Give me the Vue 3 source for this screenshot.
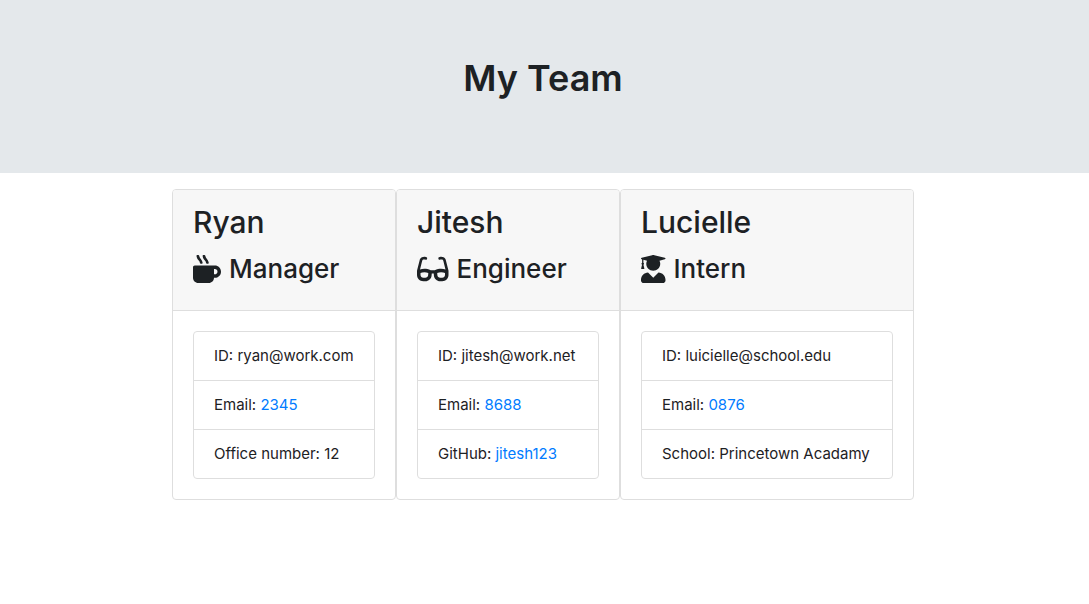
<script setup>
const icons = {
  mug: {
    width: 512,
    path: 'M127.1 146.5c1.3 7.7 8 13.5 16 13.5h16.5c9.8 0 17.6-8.5 16.3-18-3.8-28.2-16.4-54.2-36.6-74.7-14.4-14.7-23.6-33.3-26.4-53.5C111.8 5.9 105 0 96.8 0H80.4C70.6 0 63 8.5 64.1 18c3.9 31.9 18 61.3 40.6 84.4 12 12.2 19.7 27.5 22.4 44.1zm112 0c1.3 7.7 8 13.5 16 13.5h16.5c9.8 0 17.6-8.5 16.3-18-3.8-28.2-16.4-54.2-36.6-74.7-14.4-14.7-23.6-33.3-26.4-53.5C223.8 5.9 217 0 208.8 0h-16.4c-9.8 0-17.5 8.5-16.3 18 3.9 31.9 18 61.3 40.6 84.4 12 12.2 19.7 27.5 22.4 44.1zM400 192H32c-17.7 0-32 14.3-32 32v192c0 53 43 96 96 96h192c53 0 96-43 96-96h16c61.8 0 112-50.2 112-112s-50.2-112-112-112zm0 160h-16v-96h16c26.5 0 48 21.5 48 48s-21.5 48-48 48z',
  },
  glasses: {
    width: 576,
    path: 'M574.1 280.37L528.75 98.66c-5.91-23.7-21.59-44.05-43-55.81-21.44-11.73-46.97-14.11-70.19-6.33l-15.25 5.08c-8.39 2.79-12.92 11.86-10.12 20.24l5.06 15.18c2.79 8.38 11.85 12.91 20.23 10.12l13.18-4.39c10.87-3.62 23-3.57 33.16 1.73 10.29 5.37 17.57 14.56 20.37 25.82l38.46 153.82c-22.19-6.81-49.79-12.46-81.2-12.46-34.77 0-73.98 7.02-114.85 26.74h-73.18c-40.87-19.74-80.08-26.75-114.86-26.75-31.42 0-59.02 5.65-81.21 12.46l38.46-153.83c2.79-11.25 10.09-20.45 20.38-25.81 10.16-5.3 22.28-5.35 33.15-1.73l13.17 4.39c8.38 2.79 17.44-1.74 20.23-10.12l5.06-15.18c2.8-8.38-1.73-17.45-10.12-20.24l-15.25-5.08c-23.22-7.78-48.75-5.41-70.19 6.33-21.41 11.77-37.09 32.11-43 55.8L1.9 280.37A64.218 64.218 0 0 0 0 295.86v70.25C0 429.01 51.58 480 115.2 480h37.12c60.28 0 110.37-45.94 114.88-105.37l2.93-38.63h35.75l2.93 38.63C313.31 434.06 363.4 480 423.68 480h37.12c63.62 0 115.2-50.99 115.2-113.88v-70.25c0-5.23-.64-10.43-1.9-15.5zm-370.72 89.42c-1.97 25.91-24.4 46.21-51.06 46.21H115.2C86.97 416 64 393.62 64 366.11v-37.54c18.12-6.49 43.42-12.92 72.58-12.92 23.86 0 47.26 4.33 69.93 12.92l-3.13 41.22zM512 366.12c0 27.51-22.97 49.88-51.2 49.88h-37.12c-26.67 0-49.1-20.3-51.06-46.21l-3.13-41.22c22.67-8.59 46.08-12.92 69.95-12.92 29.12 0 54.43 6.44 72.55 12.93v37.54z',
  },
  graduate: {
    width: 448,
    path: 'M319.4 320.6L224 416l-95.4-95.4C57.1 323.7 0 382.2 0 454.4v9.6c0 26.5 21.5 48 48 48h352c26.5 0 48-21.5 48-48v-9.6c0-72.2-57.1-130.7-128.6-133.8zM13.6 79.8l6.4 1.5v58.4c-7 4.2-12 11.5-12 20.3 0 8.4 4.6 15.4 11.1 19.7L3.5 242c-1.7 6.9 2.1 14 7.6 14h41.8c5.5 0 9.3-7.1 7.6-14l-15.6-62.3C51.4 175.4 56 168.4 56 160c0-8.8-5-16.1-12-20.3V87.1l66 15.9c-8.6 17.2-14 36.4-14 57 0 70.7 57.3 128 128 128s128-57.3 128-128c0-20.6-5.3-39.8-14-57l96.3-23.2c18.2-4.4 18.2-27.1 0-31.5l-190.4-46c-13-3.1-26.7-3.1-39.7 0L13.6 48.2c-18.1 4.4-18.1 27.2 0 31.6z',
  },
}

const team = [
  {
    name: 'Ryan', role: 'Manager', icon: icons.mug,
    details: [
      { label: 'ID', value: 'ryan@work.com' },
      { label: 'Email', value: '2345', href: 'mailto:2345' },
      { label: 'Office number', value: '12' },
    ],
  },
  {
    name: 'Jitesh', role: 'Engineer', icon: icons.glasses,
    details: [
      { label: 'ID', value: 'jitesh@work.net' },
      { label: 'Email', value: '8688', href: 'mailto:8688' },
      { label: 'GitHub', value: 'jitesh123', href: '#jitesh123' },
    ],
  },
  {
    name: 'Lucielle', role: 'Intern', icon: icons.graduate,
    details: [
      { label: 'ID', value: 'luicielle@school.edu' },
      { label: 'Email', value: '0876', href: 'mailto:0876' },
      { label: 'School', value: 'Princetown Acadamy' },
    ],
  },
]
</script>

<template>
  <div class="page">
    <header class="banner">
      <h1>My Team</h1>
    </header>
    <main class="team">
      <article v-for="member in team" :key="member.name" class="card">
        <div class="card-header">
          <h2>{{ member.name }}</h2>
          <h3>
            <svg class="icon" :viewBox="`0 0 ${member.icon.width} 512`" aria-hidden="true">
              <path :d="member.icon.path" />
            </svg>
            <span>{{ member.role }}</span>
          </h3>
        </div>
        <div class="card-body">
          <ul>
            <li v-for="item in member.details" :key="item.label">
              {{ item.label }}: <a v-if="item.href" :href="item.href">{{ item.value }}</a><template v-else>{{ item.value }}</template>
            </li>
          </ul>
        </div>
      </article>
    </main>
  </div>
</template>

<style>
body {
  margin: 0;
  background: #fff;
}
</style>

<style scoped>
.page {
  color: #1d2124;
  font-family: Inter, "Liberation Sans", sans-serif;
  font-size: 15px;
  line-height: 24px;
}
h1,
h2,
h3,
ul {
  margin: 0;
  padding: 0;
  font-weight: 500;
}
.banner {
  padding: 54px 35px 71px 32px;
  margin-bottom: 16px;
  background: #e4e8eb;
  text-align: center;
}
h1 {
  font-size: 36px;
  font-weight: 600;
  line-height: 48px;
}
.team {
  display: flex;
  flex-wrap: wrap;
  justify-content: center;
  padding-right: 3px;
}
.card {
  box-sizing: border-box;
  min-width: 224px;
  border: 1px solid #dedede;
  border-radius: 4px;
  overflow: hidden;
}
.card:last-child {
  min-width: 294px;
}
.card-header {
  padding: 13px 20px 24px;
  border-bottom: 1px solid #dedede;
  background: #f7f7f7;
}
h2 {
  margin-bottom: 11px;
  font-size: 30px;
  line-height: 38px;
}
h3 {
  display: flex;
  align-items: center;
  gap: 8px;
  font-size: 26px;
  line-height: 34px;
}
.icon {
  height: 28px;
  fill: currentColor;
}
.card-body {
  padding: 20px;
}
ul {
  border: 1px solid #dedede;
  border-radius: 4px;
  list-style: none;
  font-weight: 400;
}
li {
  padding: 12px 20px;
}
li + li {
  border-top: 1px solid #dedede;
}
a {
  color: #007bff;
  text-decoration: none;
}
</style>
